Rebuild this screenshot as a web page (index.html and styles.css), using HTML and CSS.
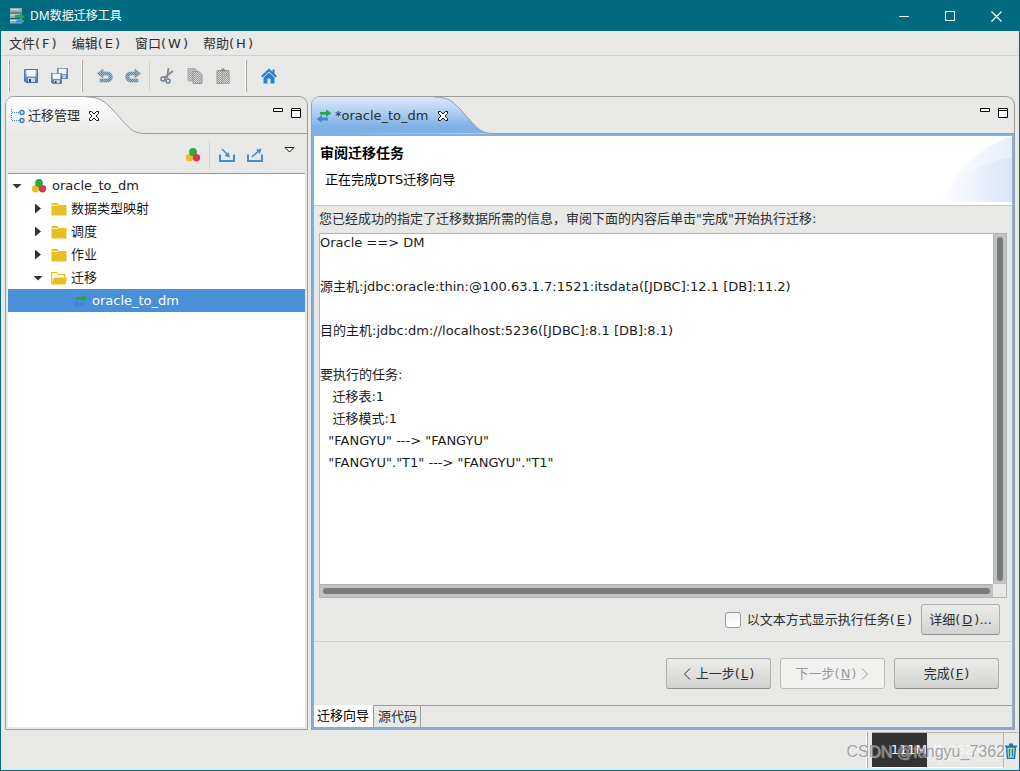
FILE: index.html
```html
<!DOCTYPE html>
<html lang="zh-CN">
<head>
<meta charset="utf-8">
<title>DM数据迁移工具</title>
<link rel="stylesheet" href="styles.css">
</head>
<body>
<svg class="defs" width="0" height="0" aria-hidden="true">
  <defs>
    <linearGradient id="gray-tab" x1="0" y1="0" x2="0" y2="1"><stop offset="0" stop-color="#fff"/><stop offset="1" stop-color="#e8e8e7"/></linearGradient>
    <linearGradient id="blue-tab" x1="0" y1="0" x2="0" y2="1"><stop offset="0" stop-color="#dbe9f9"/><stop offset=".5" stop-color="#a5c8f0"/><stop offset=".8" stop-color="#7fb0e6"/><stop offset="1" stop-color="#7fb0e6"/></linearGradient>
    <linearGradient id="disk" x1="0" y1="0" x2="0" y2="1"><stop offset="0" stop-color="#a9c1e2"/><stop offset="1" stop-color="#4a6fa5"/></linearGradient>
    <linearGradient id="arc" x1="0" y1="0" x2="1" y2="0"><stop offset="0" stop-color="#fff"/><stop offset="1" stop-color="#dce5f7"/></linearGradient>
    <pattern id="dots" width="2" height="2" patternUnits="userSpaceOnUse"><rect width="2" height="2" fill="#d9dadb"/><path d="M0 0h1v1H0zM1 1h1v1H1z" fill="#939597"/></pattern>
    <pattern id="blue-dots" width="2" height="2" patternUnits="userSpaceOnUse"><rect width="2" height="2" fill="#a9bccb"/><path d="M0 0h1v1H0zM1 1h1v1H1z" fill="#5a819f"/></pattern>
    <symbol id="balls" viewBox="0 0 16 16"><circle cx="4.5" cy="10.8" r="3.7" fill="#e6bd2c"/><circle cx="8" cy="5" r="3.9" fill="#2ca83c"/><circle cx="11.5" cy="10.8" r="3.7" fill="#d33d4e"/></symbol>
    <symbol id="arrows" viewBox="0 0 16 14"><path d="M4 3h6V0.5L15.500 4.200l-5.500 3.600V5.800H4z" fill="#2ca34b"/><path d="M12 8.500H6V6.200L0.500 10 6 13.800V11.500h6z" fill="#3c88dc"/></symbol>
    <symbol id="floppy" viewBox="0 0 14 14"><path d="M.5.5h13v13H2L.5 12z" fill="url(#disk)" stroke="#4d70a4"/><path d="M2.500 1h9v6.500h-9z" fill="#f3f6fa"/><path d="M4 9h7v4H4z" fill="#d2d8df"/><path d="M5 10h2v3H5z" fill="#30435c"/></symbol>
    <symbol id="folder" viewBox="0 0 16 14"><path d="M0.500 1h6l1.500 2h7.500v10.500H0.500z" fill="#e6bf23"/><path d="M1 3.500h6l1-1" fill="none" stroke="#fff3bd"/></symbol>
    <symbol id="folder-open" viewBox="0 0 16 14"><path d="M.7 12.500V1.500h5l1.500 2h6.500v3" fill="#fff" stroke="#e6bf23" stroke-width="1.200"/><path d="M3 6.500h13l-1.500 7H.5z" fill="#e6bf23"/></symbol>
    <symbol id="close" viewBox="0 0 12 12"><path d="M1.500 1.500h2L6 4l2.500-2.500h2v2L8 6l2.500 2.500v2h-2L6 8l-2.500 2.500h-2v-2L4 6 1.500 3.500z" fill="#fff" stroke="#111"/></symbol>
    <symbol id="mini" viewBox="0 0 11 11"><path d="M.5 1.500h9v3h-9z" fill="#fff" stroke="#000"/></symbol>
    <symbol id="maxi" viewBox="0 0 11 11"><path d="M.5 1.500h9v9h-9zM.5 3.500h9" fill="#fff" stroke="#000"/></symbol>
  </defs>
</svg>
<div class="window">
  <header class="titlebar">
    <svg class="app-icon" width="16" height="16" viewBox="0 0 16 16" aria-hidden="true"><path d="M1 0h12v4.500H1zM1 5.500h12V10H1zM1 11h12v4.500H1z" fill="#9fa9a9"/><path d="M1 1h9v1H1zM1 6.500h7v1H1zM1 12h7v1H1z" fill="#d3dcd9"/><path d="M6 7h5V5l4.500 4-4.500 3.500V10H6z" fill="#28a845"/><path d="M15 12h-5v-1.500L6 13.500 10 16v-1.500h5z" fill="#408fe0"/></svg>
    <span class="app-title">DM数据迁移工具</span>
    <button class="win-btn" aria-label="最小化"><svg width="11" height="11"><path d="M0 5.500h10" stroke="#fff"/></svg></button>
    <button class="win-btn" aria-label="最大化"><svg width="11" height="11"><path d="M.5.5h9v9h-9z" fill="none" stroke="#fff"/></svg></button>
    <button class="win-btn" aria-label="关闭"><svg width="11" height="11"><path d="M.5.5l10 10M10.500.5l-10 10" stroke="#fff" stroke-width="1.200"/></svg></button>
  </header>
  <nav class="menubar">
    <button>文件(<span class="key">F</span>)</button>
    <button>编辑(<span class="key">E</span>)</button>
    <button>窗口(<span class="key">W</span>)</button>
    <button>帮助(<span class="key">H</span>)</button>
  </nav>
  <div class="toolbar">
    <span class="handle"></span>
    <button class="tool" aria-label="保存"><svg width="14" height="14"><use href="#floppy"/></svg></button>
    <button class="tool" aria-label="全部保存"><svg width="17" height="16"><use href="#floppy" x="6" y="0" width="11" height="11"/><use href="#floppy" x="0" y="5" width="11" height="11"/></svg></button>
    <span class="handle"></span>
    <button class="tool" aria-label="撤销"><svg width="16" height="16" viewBox="0 0 16 16"><path d="M0.500 5.500L6 1v3h4.500c6.500 0 6.500 10 0 10H3v-3h7c2.500 0 2.500-4 0-4H6v3z" fill="url(#blue-dots)" stroke="#7695ab" stroke-width=".6"/></svg></button>
    <button class="tool" aria-label="重做"><svg width="16" height="16" viewBox="0 0 16 16"><path d="M15.500 5.500L10 1v3H5.500c-6.500 0-6.500 10 0 10H13v-3H6c-2.500 0-2.500-4 0-4h4v3z" fill="url(#blue-dots)" stroke="#7695ab" stroke-width=".6"/></svg></button>
    <span class="divider"></span>
    <button class="tool" aria-label="剪切"><svg width="16" height="16" viewBox="0 0 16 16" fill="none"><path d="M9.500 0L8 10M14 3L5 10" stroke="#85898d" stroke-width="1.800"/><circle cx="4" cy="11" r="2" stroke="#6b7f90" stroke-width="1.500"/><circle cx="9" cy="13" r="2" stroke="#6b7f90" stroke-width="1.500"/></svg></button>
    <button class="tool" aria-label="复制"><svg width="16" height="16" viewBox="0 0 16 16"><path d="M1 .5h7l2 2V13H1z" fill="url(#dots)" stroke="#aaa"/><path d="M6 3.500h6l3 3v9H6z" fill="url(#dots)" stroke="#999"/></svg></button>
    <button class="tool" aria-label="粘贴"><svg width="16" height="16" viewBox="0 0 16 16"><path d="M2 2.500h12v13H2z" fill="url(#dots)" stroke="#a1937e"/><path d="M5 3.500l2-3h2l2 3z" fill="#8c8c8c"/><path d="M7 6.500h5l2 2v7H7z" fill="url(#dots)" stroke="#aaa"/></svg></button>
    <span class="handle"></span>
    <button class="tool" aria-label="主页"><svg width="16" height="16" viewBox="0 0 16 16"><path d="M8 .5L0 8l1.500 1.500L8 3.500l6.500 6L16 8l-2.500-2.300V1.500h-2v2.300z" fill="#2b80ce"/><path d="M2.500 9.500L8 4.500l5.500 5v6h-4v-5h-3v5h-4z" fill="#2b80ce"/></svg></button>
  </div>
  <main class="workbench">
    <section class="panel explorer">
      <div class="tabs">
        <div class="tab">
          <svg class="tab-shape" width="140" height="37" viewBox="0 0 140 37" aria-hidden="true"><path d="M0 37V0H80C94 0 98 4 106 12L115 22C124 32 127 36.500 140 36.500" fill="url(#gray-tab)"/><path d="M80 0C94 0 98 4 106 12L115 22C124 32 127 36.500 140 36.500" fill="none" stroke="#9b9d99"/></svg>
          <svg width="14" height="16" viewBox="0 0 14 16" fill="none"><path d="M.5 1v12M1 4.500h8M1 12.500h8" stroke="#418fd0" stroke-dasharray="1 1"/><circle cx="11" cy="4.500" r="2" stroke="#3383c6" stroke-width="1.400"/><circle cx="11" cy="12.500" r="2" stroke="#3383c6" stroke-width="1.400"/></svg>
          <span>迁移管理</span>
          <button aria-label="关闭视图"><svg width="12" height="12"><use href="#close"/></svg></button>
        </div>
        <div class="tabs-rest">
          <button aria-label="最小化"><svg width="11" height="11"><use href="#mini"/></svg></button>
          <button aria-label="最大化"><svg width="11" height="11"><use href="#maxi"/></svg></button>
        </div>
      </div>
      <div class="view-tools">
        <button class="tool" aria-label="新建迁移"><svg width="16" height="16"><use href="#balls"/></svg></button>
        <span class="divider"></span>
        <button class="tool" aria-label="导入"><svg width="18" height="16" viewBox="0 0 18 16" fill="none" stroke="#4a8dc9"><path d="M2 7.500v6.500h14V7.500" stroke-width="2"/><path d="M4 2l6 6" stroke-width="1.500"/><path d="M12 10.500L6.500 9 10.500 5z" fill="#4a8dc9" stroke="none"/></svg></button>
        <button class="tool" aria-label="导出"><svg width="18" height="16" viewBox="0 0 18 16" fill="none" stroke="#4a8dc9"><path d="M2 7.500v6.500h14V7.500" stroke-width="2"/><path d="M6 10l7-6.500" stroke-width="1.500"/><path d="M15.500 1.500L14 7 10 2.700z" fill="#4a8dc9" stroke="none"/></svg></button>
        <button class="view-menu" aria-label="视图菜单"><svg width="11" height="7"><path d="M1 .5h9L5.500 5z" fill="#fff" stroke="#111"/></svg></button>
      </div>
      <ul class="tree" role="tree">
        <li class="node" role="treeitem"><i class="twist open"></i><svg width="16" height="16"><use href="#balls"/></svg><span>oracle_to_dm</span></li>
        <li class="node level-2" role="treeitem"><i class="twist"></i><svg width="16" height="14"><use href="#folder"/></svg><span>数据类型映射</span></li>
        <li class="node level-2" role="treeitem"><i class="twist"></i><svg width="16" height="14"><use href="#folder"/></svg><span>调度</span></li>
        <li class="node level-2" role="treeitem"><i class="twist"></i><svg width="16" height="14"><use href="#folder"/></svg><span>作业</span></li>
        <li class="node level-2" role="treeitem"><i class="twist open"></i><svg width="16" height="14"><use href="#folder-open"/></svg><span>迁移</span></li>
        <li class="node level-3 selected" role="treeitem" aria-selected="true"><svg width="16" height="14"><use href="#arrows"/></svg><span>oracle_to_dm</span></li>
      </ul>
    </section>
    <section class="panel editor">
      <div class="tabs">
        <div class="tab">
          <svg class="tab-shape" width="182" height="37" viewBox="0 0 182 37" aria-hidden="true"><path d="M0 37V0H122C136 0 140 4 148 12L157 22C166 32 169 36.500 182 36.500" fill="url(#blue-tab)"/><path d="M122 0C136 0 140 4 148 12L157 22C166 32 169 36.500 182 36.500" fill="none" stroke="#9b9d99"/></svg>
          <svg width="16" height="14"><use href="#arrows"/></svg>
          <span>*oracle_to_dm</span>
          <button aria-label="关闭编辑器"><svg width="12" height="12"><use href="#close"/></svg></button>
        </div>
        <div class="tabs-rest">
          <button aria-label="最小化"><svg width="11" height="11"><use href="#mini"/></svg></button>
          <button aria-label="最大化"><svg width="11" height="11"><use href="#maxi"/></svg></button>
        </div>
      </div>
      <div class="editor-body">
        <div class="banner">
          <div>
            <h1>审阅迁移任务</h1>
            <p>正在完成DTS迁移向导</p>
          </div>
          <svg width="74" height="66" viewBox="0 0 74 66" aria-hidden="true"><path d="M0 66C20 35 38 12 74 0V66z" fill="url(#arc)" opacity=".65"/><path d="M0 66C20 40 40 26 74 22V66z" fill="url(#arc)"/></svg>
        </div>
        <div class="page">
          <label class="hint" for="summary">您已经成功的指定了迁移数据所需的信息，审阅下面的内容后单击"完成"开始执行迁移:</label>
          <div class="summary">
            <textarea id="summary" readonly wrap="off">Oracle ==&gt; DM

源主机:jdbc:oracle:thin:@100.63.1.7:1521:itsdata([JDBC]:12.1 [DB]:11.2)

目的主机:jdbc:dm://localhost:5236([JDBC]:8.1 [DB]:8.1)

要执行的任务:
   迁移表:1
   迁移模式:1
  "FANGYU" ---&gt; "FANGYU"
  "FANGYU"."T1" ---&gt; "FANGYU"."T1"</textarea>
            <div class="scroll vertical"><i></i></div>
            <div class="scroll"><i></i></div>
          </div>
          <div class="options">
            <label><input type="checkbox">以文本方式显示执行任务(<u class="key">E</u>)</label>
            <button class="btn detail">详细(<u class="key">D</u>)...</button>
          </div>
        </div>
        <div class="wizard-buttons">
          <button class="btn"><svg width="8" height="12"><path d="M7 .5L1.500 6 7 11.500" fill="none" stroke="currentColor"/></svg>上一步(<u class="key">L</u>)</button>
          <button class="btn" disabled>下一步(<u class="key">N</u>)<svg width="8" height="12"><path d="M1 .5L6.500 6 1 11.500" fill="none" stroke="currentColor"/></svg></button>
          <button class="btn">完成(<u class="key">F</u>)</button>
        </div>
        <div class="page-tabs">
          <button class="active">迁移向导</button>
          <button>源代码</button>
        </div>
      </div>
    </section>
  </main>
  <footer class="statusbar">
    <span class="status-handle"></span>
    <div class="heap"><span>111M 共 262M</span></div>
    <button class="trash" aria-label="运行垃圾回收"><svg width="12" height="16" viewBox="0 0 12 16"><path d="M1.500 4h9l-1 11.500h-7z" fill="#a8d8b0" stroke="#2674a8" stroke-width="1.400"/><path d="M4.500 6v7.500M7.500 6v7.500" stroke="#2674a8" stroke-width="1.200"/><path d="M0 2.500h12V4H0zM4 .5h4v2H4z" fill="#2674a8"/></svg></button>
    <span class="watermark">CSDN @fangyu_7362</span>
  </footer>
</div>
</body>
</html>
```
FILE: styles.css
```css
* { box-sizing: border-box; }

body {
  margin: 0;
  font: 13px/22px "DejaVu Sans", "Noto Sans CJK SC", sans-serif;
  color: #2b2f30;
}

button {
  margin: 0;
  padding: 0;
  border: 0;
  background: none;
  font: inherit;
  color: inherit;
}

svg { display: block; flex: none; }
.defs { position: absolute; }
.key { margin: 0 1px; }
.menubar .key,
.options .key { margin: 0 2px; }

.window {
  display: flex;
  flex-direction: column;
  height: 100vh;
  border: 1px solid #006a7f;
  background: #e8e8e7;
}

.titlebar {
  display: flex;
  align-items: center;
  height: 30px;
  flex: none;
  padding-left: 8px;
  background: #006a80;
  color: #fff;
}
.app-title {
  flex: 1;
  margin-left: 5px;
  font: 12px/20px "Noto Sans", "Noto Sans CJK SC", sans-serif;
}
.win-btn {
  display: grid;
  place-items: center;
  width: 46px;
  height: 30px;
}

.menubar {
  display: flex;
  gap: 15px;
  flex: none;
  height: 25px;
  padding: 2px 8px 0;
  border-bottom: 1px solid #cfcfcd;
}

.toolbar {
  display: flex;
  align-items: center;
  flex: none;
  height: 40px;
}
.handle {
  width: 2px;
  height: 32px;
  margin: 0 8px;
  background: #a9aaa8;
  border-left: 1px solid #fff;
}
.handle:first-child { margin: 0 7px; }
.tool {
  display: grid;
  place-items: center;
  width: 28px;
  height: 28px;
}
.divider {
  width: 1px;
  height: 28px;
  margin: 0 3px 0 2px;
  background: #cfcfcd;
}

.workbench {
  display: flex;
  flex: 1;
  gap: 3px;
  min-height: 0;
  padding: 0 4px;
}
.panel {
  display: flex;
  flex-direction: column;
  border: 1px solid #9b9d99;
  border-radius: 9px 9px 0 0;
}
.explorer { width: 303px; flex: none; }
.editor { flex: 1; min-width: 0; border-bottom: 0; }

.tabs { display: flex; height: 37px; flex: none; }
.tab {
  position: relative;
  display: flex;
  align-items: center;
  gap: 3px;
  width: 140px;
  padding-left: 5px;
}
.editor .tab { width: 182px; padding-left: 4px; }
.tab > * { position: relative; }
.tab > .tab-shape {
  position: absolute;
  left: 0;
  top: 0;
  border-top-left-radius: 8px;
}
.tab > button { margin-left: 5px; }
.tabs-rest {
  display: flex;
  flex: 1;
  justify-content: flex-end;
  gap: 7px;
  padding: 10px 5px 0 0;
  border-bottom: 1px solid #9b9d99;
}
.tabs-rest button { height: 11px; }

.view-tools {
  display: flex;
  align-items: center;
  justify-content: flex-end;
  height: 39px;
  flex: none;
  padding: 2px 12px 0 0;
}
.view-menu { align-self: flex-start; margin: 11px 0 0 15px; }

.tree {
  flex: 1;
  margin: 0 2px 2px;
  padding: 0;
  border-top: 1px solid #9b9d99;
  background: #fff;
  color: #1b1b1b;
  list-style: none;
}
.node {
  display: flex;
  align-items: center;
  gap: 5px;
  height: 23px;
  padding-left: 4px;
}
.node.level-2 { padding-left: 25px; gap: 4px; }
.node.level-3 { padding-left: 64px; gap: 4px; }
.node.selected { background: #4a90d9; color: #fff; }
.twist { width: 14px; height: 10px; }
.twist::before {
  content: "";
  display: block;
  width: 6px;
  height: 10px;
  margin-left: 2px;
  background: #303435;
  clip-path: polygon(0 0, 100% 50%, 0 100%);
}
.twist.open::before {
  width: 10px;
  height: 5px;
  margin: 3px 0 0;
  clip-path: polygon(0 0, 100% 0, 50% 100%);
}

.editor-body {
  display: flex;
  flex: 1;
  flex-direction: column;
  min-height: 0;
  border: 2px solid #7fb0e0;
  border-bottom: 3px solid #8ba9d0;
}
.banner {
  display: flex;
  justify-content: space-between;
  flex: none;
  height: 70px;
  border-bottom: 1px solid #c5c6c4;
  background: #fff;
  color: #000;
}
.banner h1 {
  margin: 6px 0 0 6px;
  font-size: 14px;
  line-height: 22px;
}
.banner p { margin: 5px 0 0 11px; }

.page {
  display: flex;
  flex: 1;
  flex-direction: column;
  min-height: 0;
  padding: 2px 5px 6px;
}
.hint { height: 25px; white-space: nowrap; }
.summary {
  display: grid;
  grid-template: minmax(0, 1fr) 13px / minmax(0, 1fr) 13px;
  flex: 1;
  min-height: 0;
  border: 1px solid #b4b5b2;
  overflow: hidden;
}
.summary textarea {
  display: block;
  margin: -2px 0 0;
  padding: 0;
  border: 0;
  outline: 0;
  resize: none;
  overflow: hidden;
  background: #fff;
  font: inherit;
  line-height: 22px;
  color: #1b1b1b;
}
.scroll {
  display: flex;
  padding: 3px;
  border-top: 1px solid #b0b2b0;
  background: #c1c3c1;
}
.scroll.vertical { border-top: 0; border-left: 1px solid #b0b2b0; }
.scroll i { flex: 1; border-radius: 3px; background: #777c7b; }

.options {
  display: flex;
  align-items: center;
  justify-content: flex-end;
  gap: 9px;
  margin-top: 6px;
  padding-right: 7px;
}
.options label { display: flex; align-items: center; }
.options input {
  appearance: none;
  width: 16px;
  height: 16px;
  margin: 0 6px 0 0;
  border: 1px solid #999b98;
  border-radius: 3px;
  background: linear-gradient(#f2f2f2, #fff);
}
.btn {
  display: flex;
  align-items: center;
  justify-content: center;
  width: 105px;
  height: 31px;
  border: 1px solid #adafac;
  border-bottom-color: #8f918e;
  border-radius: 3px;
  background: linear-gradient(#ececeb, #d2d2d0);
}
.btn svg:first-child { margin-right: 5px; }
.btn svg:last-child { margin-left: 5px; }
.btn.detail { width: 79px; }
.btn:disabled {
  border-color: #b9bab8;
  background: #f1f1f0;
  color: #999b9b;
}

.wizard-buttons {
  display: flex;
  justify-content: flex-end;
  gap: 9px;
  flex: none;
  padding: 16px 13px;
  border-top: 1px solid #cfcfcd;
}
.page-tabs {
  display: flex;
  flex: none;
  height: 22px;
  border-top: 1px solid #9b9d99;
}
.page-tabs button {
  padding: 0 3px 0 4px;
  border-right: 1px solid #9b9d99;
  line-height: 18px;
}
.page-tabs .active {
  margin-top: -1px;
  padding: 0 4px 0 3px;
  background: #fff;
  color: #000;
}

.statusbar {
  position: relative;
  display: flex;
  justify-content: flex-end;
  flex: none;
  height: 40px;
  padding: 2px 1px 2px 0;
}
.status-handle {
  width: 2px;
  margin-right: 4px;
  border-left: 1px solid #fff;
  background: #a9aaa8;
}
.heap {
  width: 132px;
  border: 1px solid #b4b5b2;
  border-left: 0;
  border-bottom-color: #fff;
  background: linear-gradient(90deg, #333 55px, #e8e8e7 55px);
  color: #fafafa;
  text-align: center;
  line-height: 34px;
}
.trash {
  display: grid;
  place-items: center;
  width: 14px;
  border-top: 1px solid #b4b5b2;
}
.watermark {
  position: absolute;
  right: 14px;
  top: 10px;
  font: 16px/24px "Liberation Sans", sans-serif;
  color: #8c8c8ccc;
  text-shadow: 1px 1px 1px #fff9;
}
```
